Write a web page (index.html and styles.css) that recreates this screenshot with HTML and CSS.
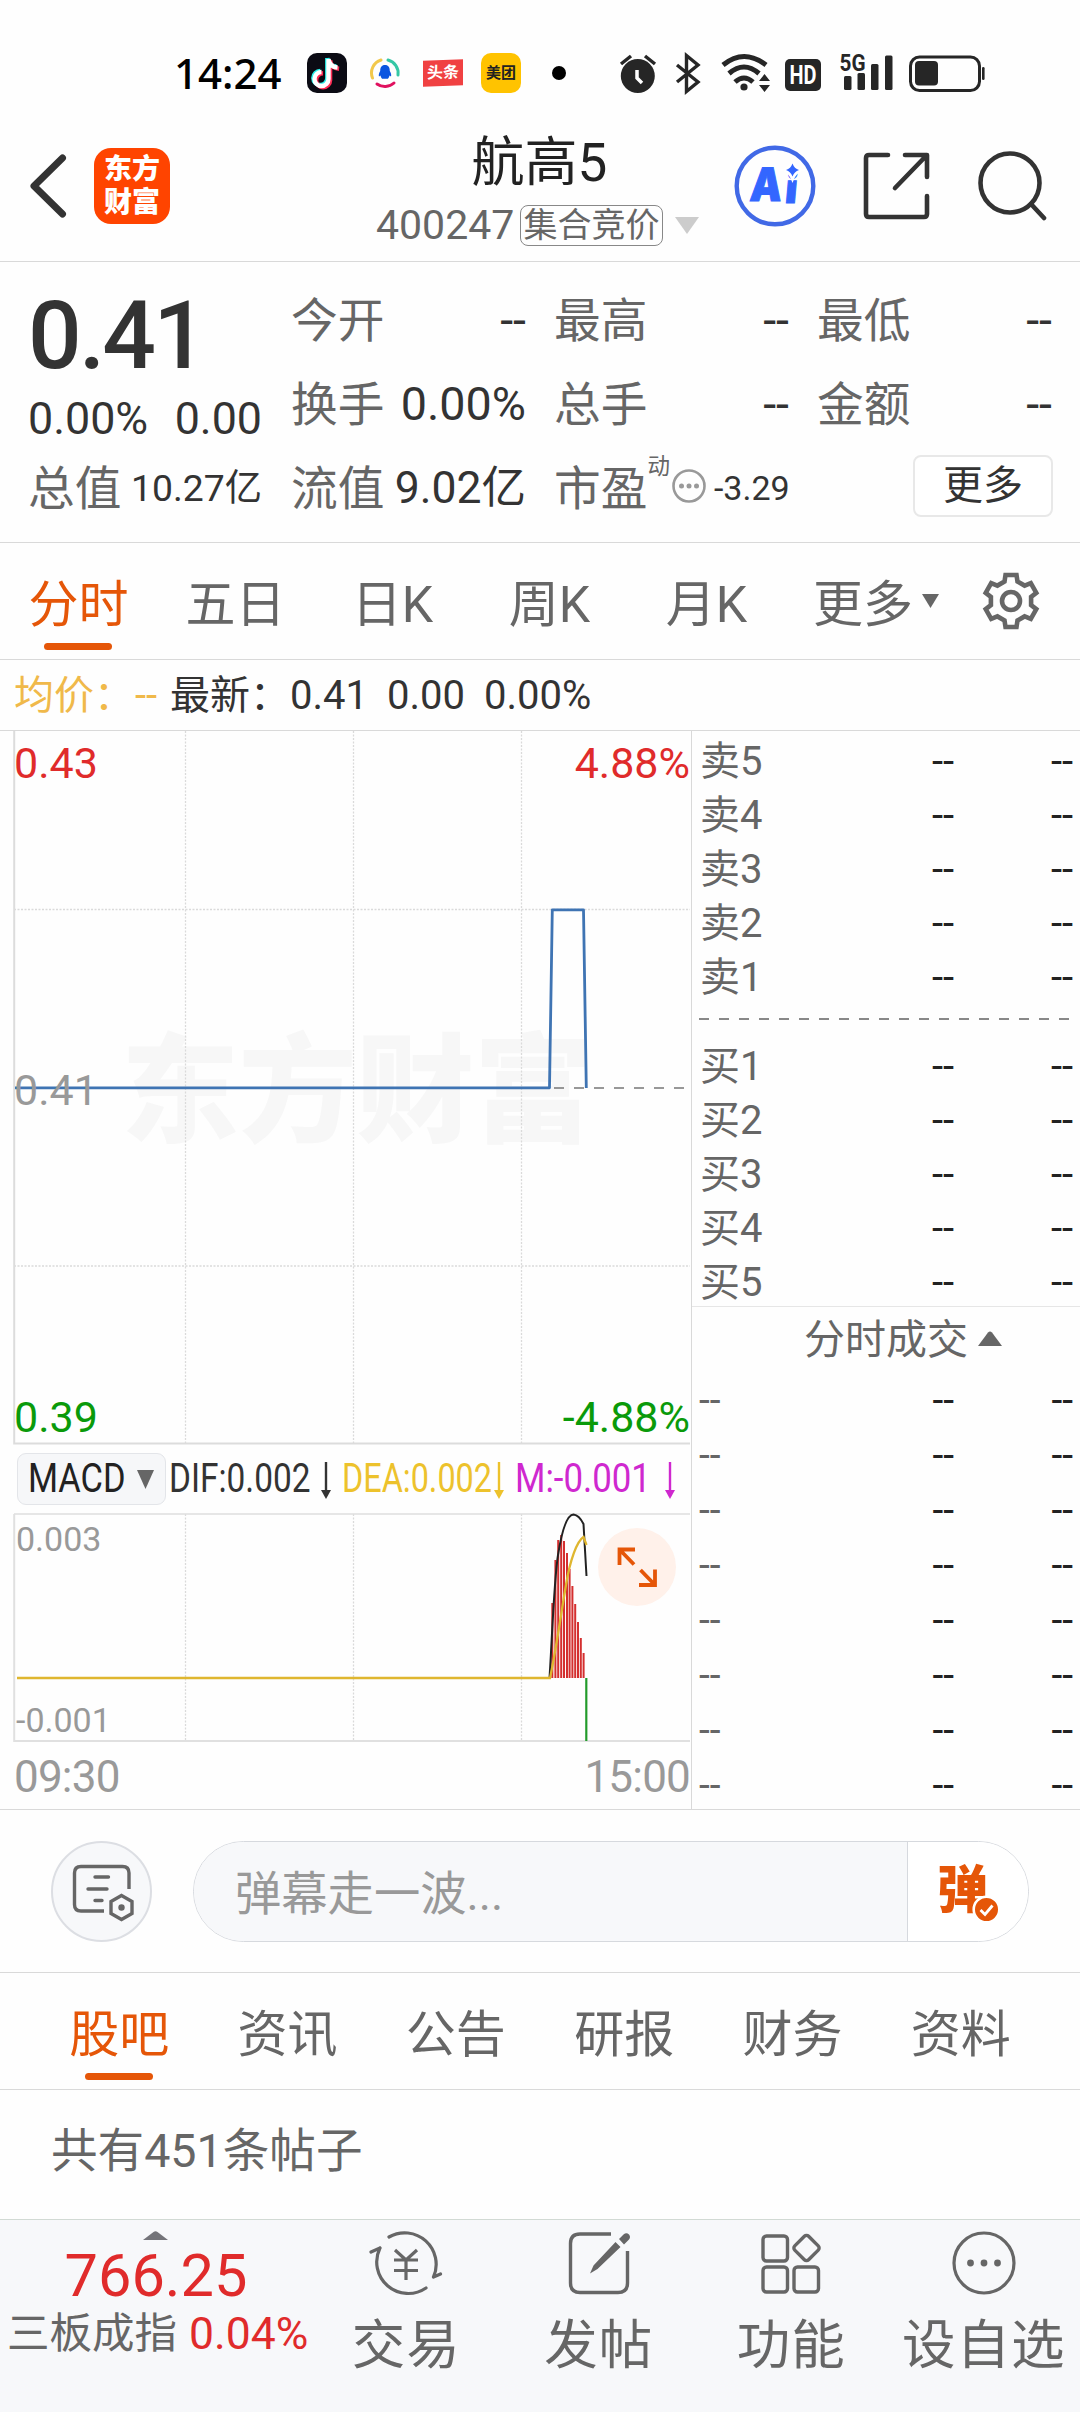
FILE: index.html
```html
<!DOCTYPE html>
<html lang="zh-CN">
<head>
<meta charset="utf-8">
<title>航高5 400247</title>
<link rel="stylesheet" href="styles.css">
</head>
<body>
<div class="status">
  <span class="clock">14:24</span>
  <svg class="st-tiktok" width="40" height="40" viewBox="0 0 40 40">
    <rect width="40" height="40" rx="10" fill="#0b0b14"/>
    <g fill="none" stroke-width="4.400">
      <path d="M21.500 6v20a7 7 0 1 1-7-7M21.500 6c.5 5 4 8 9 8.500" stroke="#2af0ea" transform="translate(-1.200 -1)"/>
      <path d="M21.500 6v20a7 7 0 1 1-7-7M21.500 6c.5 5 4 8 9 8.500" stroke="#fe2c55" transform="translate(1.600 1.200)"/>
      <path d="M21.500 6v20a7 7 0 1 1-7-7M21.500 6c.5 5 4 8 9 8.500" stroke="#fff"/>
    </g>
  </svg>
  <svg class="st-tencent" width="32" height="32" viewBox="0 0 32 32">
    <g fill="none" stroke-width="3" stroke-linecap="round">
      <path d="M3.500 21A13.500 13.500 0 0 1 12 3" stroke="#f2c84b"/>
      <path d="M19 3A13.500 13.500 0 0 1 29 18" stroke="#35c7a5"/>
      <path d="M8 27A13.500 13.500 0 0 0 25 26" stroke="#e0115f"/>
    </g>
    <path d="M16 8c-3.500 0-4.800 2.500-4.800 6-1.200 2-1.800 4-1.200 5.500l1.500-1c.3 1.500 1 2.500 1.500 3.200h6c.5-.7 1.200-1.700 1.500-3.200l1.500 1c.6-1.500 0-3.500-1.200-5.500 0-3.500-1.300-6-4.800-6z" fill="#0b55e0"/>
  </svg>
  <span class="st-toutiao">头条</span>
  <span class="st-meituan">美团</span>
  <span class="st-dot"></span>
  <svg class="st-system" width="370" height="64" viewBox="618 41 370 64" fill="#262626">
    <circle cx="637.800" cy="76" r="17"/>
    <path d="M621 64l10-8M655 64l-10-8" stroke="#262626" stroke-width="3.500"/>
    <path d="M637 70v8l5 5" stroke="#fff" stroke-width="3.500" fill="none"/>
    <path d="M677 65l21 17-11.500 9.500V55.500L698 65l-21 17" fill="none" stroke="#262626" stroke-width="3.400"/>
    <g fill="none" stroke="#262626" stroke-width="5">
      <path d="M723 65q21-17 43 0"/><path d="M729 73.500q15-13 30 0"/><path d="M735 82q9-8 18 0"/>
    </g>
    <circle cx="744" cy="87" r="3.600"/>
    <path d="M759 81l5.500-7 5.500 7zM759 85l5.500 7 5.500-7z"/>
    <rect x="785" y="59" width="36" height="32" rx="5"/>
    <text x="789.500" y="84" font-size="25" font-weight="700" fill="#fff" textLength="27" lengthAdjust="spacingAndGlyphs">HD</text>
    <text x="839.500" y="70.500" font-size="24" font-weight="700" textLength="26" lengthAdjust="spacingAndGlyphs">5G</text>
    <rect x="844" y="76" width="7.500" height="14" rx="1.500"/><rect x="857.500" y="73" width="7.500" height="17" rx="1.500"/>
    <rect x="871" y="64" width="7.500" height="26" rx="1.500"/><rect x="885" y="55.500" width="7.500" height="34.500" rx="1.500"/>
    <rect x="910.500" y="57" width="69" height="33.500" rx="9" fill="none" stroke="#262626" stroke-width="3"/>
    <rect x="915" y="61" width="23" height="24.500" rx="4"/><rect x="982" y="67" width="2.600" height="13" rx="1.300"/>
  </svg>
</div>

<header class="header">
  <div class="head-left">
    <svg class="back" width="38" height="64" viewBox="0 0 38 64"><path d="M33.500 4L5 32l28.500 28" fill="none" stroke="#333" stroke-width="7" stroke-linecap="round" stroke-linejoin="round"/></svg>
    <div class="app-logo"><span>东方</span><span>财富</span></div>
  </div>
  <div class="head-title">
    <div class="name">航高5</div>
    <div class="code-row">
      <span class="code">400247</span><span class="tag">集合竞价</span>
      <svg class="code-caret" width="24" height="17" viewBox="0 0 24 17"><path d="M0 0h24L12 17z" fill="#ccc"/></svg>
    </div>
  </div>
  <div class="head-right">
    <svg width="82" height="84" viewBox="0 0 82 84">
      <circle cx="41" cy="42" r="38.300" fill="none" stroke="#4169e6" stroke-width="4.400"/>
      <g transform="translate(15 57) skewX(-5)"><text class="ai-text" y="0" font-size="46" fill="#3366ff" stroke="#3366ff" stroke-width="1"><tspan x="0" textLength="32" lengthAdjust="spacingAndGlyphs">A</tspan><tspan x="35.500" dy="2" font-size="41">i</tspan></text></g>
      <path d="M58.500 17q-3 7.500-8.500 9 5.500 1.500 8.500 9 3-7.500 8.500-9-5.500-1.500-8.500-9z" fill="#fff" stroke="#fff" stroke-width="3"/>
      <path d="M58.500 19.500q1.800 5 6.500 6.500-4.700 1.500-6.500 6.500-1.800-5-6.500-6.500 4.700-1.500 6.500-6.500z" fill="#3366ff"/>
    </svg>
    <svg width="67" height="68" viewBox="0 0 67 68" fill="none" stroke="#333" stroke-width="4.600" stroke-linecap="round" stroke-linejoin="round">
      <path d="M25 3H6Q3 3 3 6v56q0 3 3 3h55q3 0 3-3V44M64 25V3H42M63 4L32 36"/>
    </svg>
    <svg width="69" height="72" viewBox="0 0 69 72" fill="none" stroke="#333" stroke-width="4.600" stroke-linecap="round">
      <circle cx="32" cy="33" r="29.500"/><path d="M53 54l13 14"/>
    </svg>
  </div>
</header>

<section class="quote">
  <div class="q-main">
    <div class="price">0.41</div>
    <div class="change"><span>0.00%</span><span>0.00</span></div>
    <div class="cell"><span class="lb">总值</span><span class="v37">10.27亿</span></div>
  </div>
  <div class="q-grid">
    <div class="cell"><span class="lb">今开</span><span>--</span></div>
    <div class="cell"><span class="lb">最高</span><span>--</span></div>
    <div class="cell"><span class="lb">最低</span><span>--</span></div>
    <div class="cell"><span class="lb">换手</span><span>0.00%</span></div>
    <div class="cell"><span class="lb">总手</span><span>--</span></div>
    <div class="cell"><span class="lb">金额</span><span>--</span></div>
    <div class="cell"><span class="lb">流值</span><span class="v44">9.02亿</span></div>
    <div class="cell pe">
      <span class="lb">市盈</span><span class="dyn">动</span>
      <svg width="34" height="36" viewBox="0 0 34 36"><circle cx="17" cy="17" r="15.500" fill="none" stroke="#999" stroke-width="2.600"/><g fill="#999"><circle cx="9.500" cy="17" r="2.500"/><circle cx="17" cy="17" r="2.500"/><circle cx="24.500" cy="17" r="2.500"/></g></svg>
      <span class="v34">-3.29</span>
    </div>
    <div class="cell more-cell"><button class="more">更多</button></div>
  </div>
</section>

<nav class="tabs periods">
  <a class="tab active">分时</a><a class="tab">五日</a><a class="tab">日K</a><a class="tab">周K</a><a class="tab">月K</a>
  <a class="tab has-caret">更多<svg class="caret" width="17" height="14" viewBox="0 0 17 14"><path d="M0 0h17L8.500 14z" fill="#666"/></svg></a>
  <svg class="gear" width="60" height="60" viewBox="-30 -30 60 60" fill="none" stroke="#666" stroke-width="4.600">
    <path d="M-5.500-26H5.500L6.500-19.500 13.600-15.400 19.800-17.800 25.300-8.200 20.100-4.100V4.100L25.300 8.200 19.800 17.800 13.600 15.400 6.500 19.500 5.500 26H-5.500L-6.500 19.500-13.600 15.400-19.800 17.800-25.300 8.200-20.100 4.100V-4.100L-25.300-8.200-19.800-17.800-13.600-15.400-6.500-19.500Z"/><circle r="9"/>
  </svg>
</nav>

<div class="avg">
  <span class="gold">均价：</span><span class="gold avg-v">--</span><span>最新：</span><span class="a1">0.41</span><span class="a2">0.00</span><span>0.00%</span>
</div>

<main class="board">
  <div class="charts">
    <svg class="price-chart" width="691" height="714" viewBox="0 731 691 714">
      <text class="watermark" x="121" y="1133" font-size="118" textLength="471">东方财富</text>
      <g class="grid"><path d="M185.500 731V1443M353.500 731V1443M521.500 731V1443M14 909.500H690M14 1266H690"/></g>
      <path d="M14.200 731V1443.500H690" fill="none" stroke="#dcdcdc" stroke-width="2"/>
      <path d="M554 1088H690" stroke="#777" stroke-width="1.600" stroke-dasharray="10 10"/>
      <path d="M15 1087.800H549.500L552.300 909.800H583.500L586.300 1088" fill="none" stroke="#3f74b3" stroke-width="2.800" stroke-linejoin="round"/>
      <g font-size="43">
        <text x="14" y="777.500" fill="#e02b2b">0.43</text><text x="690" y="777.500" fill="#e02b2b" text-anchor="end">4.88%</text>
        <text x="14" y="1104.500" fill="#999">0.41</text>
        <text x="14" y="1431.500" fill="#0a9a0a">0.39</text><text x="690" y="1431.500" fill="#0a9a0a" text-anchor="end">-4.88%</text>
      </g>
    </svg>
    <div class="legend">
      <div class="indicator">
        <span class="squeeze macd-name">MACD</span>
        <svg width="17" height="19" viewBox="0 0 17 19"><path d="M0 0h17L8.500 19z" fill="#666"/></svg>
      </div>
      <div class="item dif"><span class="squeeze">DIF:0.002</span><svg width="10" height="37" viewBox="0 0 10 37"><path d="M5 0v30" stroke="currentColor" stroke-width="2.400"/><path d="M0 28h10l-5 9z" fill="currentColor"/></svg></div>
      <div class="item dea"><span class="squeeze">DEA:0.002</span><svg width="10" height="37" viewBox="0 0 10 37"><path d="M5 0v30" stroke="currentColor" stroke-width="2.400"/><path d="M0 28h10l-5 9z" fill="currentColor"/></svg></div>
      <div class="item m"><span class="squeeze">M:-0.001</span><svg width="10" height="37" viewBox="0 0 10 37"><path d="M5 0v30" stroke="currentColor" stroke-width="2.400"/><path d="M0 28h10l-5 9z" fill="currentColor"/></svg></div>
    </div>
    <svg class="macd-chart" width="691" height="230" viewBox="0 1513 691 230">
      <g class="grid"><path d="M185.500 1514V1741M353.500 1514V1741M521.500 1514V1741"/></g>
      <path d="M14 1514H690" stroke="#dedede" stroke-width="1.400"/>
      <path d="M14.200 1514V1741H690" fill="none" stroke="#e0e0e0" stroke-width="2"/>
      <path d="M552.300 1678V1603M555.400 1678V1560M558.200 1678V1540M561.200 1678V1535M564 1678V1541M567 1678V1553M569.600 1678V1569M572.400 1678V1586M575.200 1678V1604M578 1678V1622M580.800 1678V1638M583.600 1678V1653" stroke="#d42f2f" stroke-width="2"/>
      <path d="M586.300 1678V1741" stroke="#239b2b" stroke-width="2.200"/>
      <path d="M549.500 1678C552 1640 554 1580 558 1555C562 1530 567 1514.500 573.500 1514.500C578 1515 581 1519 583.500 1524L586.500 1576" fill="none" stroke="#222" stroke-width="2"/>
      <path d="M17 1678H550C556 1650 560 1620 566 1585C570 1560 577 1541 583.500 1537L586.500 1545" fill="none" stroke="#dfb62f" stroke-width="2.300"/>
      <g font-size="34" fill="#999"><text x="16" y="1551">0.003</text><text x="16" y="1732">-0.001</text></g>
      <circle cx="637" cy="1567" r="39" fill="#fff1ea"/>
      <path d="M619.500 1565V1549.500H635M620 1550L634 1564.500M655 1569.500V1585H639M654.500 1584.500L640.500 1570" fill="none" stroke="#e55608" stroke-width="3.800"/>
    </svg>
    <div class="times"><span>09:30</span><span>15:00</span></div>
  </div>
  <div class="book">
    <div class="orders sell">
      <div class="o"><span>卖5</span><b>--</b><b>--</b></div><div class="o"><span>卖4</span><b>--</b><b>--</b></div><div class="o"><span>卖3</span><b>--</b><b>--</b></div><div class="o"><span>卖2</span><b>--</b><b>--</b></div><div class="o"><span>卖1</span><b>--</b><b>--</b></div>
    </div>
    <div class="sep"></div>
    <div class="orders buy">
      <div class="o"><span>买1</span><b>--</b><b>--</b></div><div class="o"><span>买2</span><b>--</b><b>--</b></div><div class="o"><span>买3</span><b>--</b><b>--</b></div><div class="o"><span>买4</span><b>--</b><b>--</b></div><div class="o"><span>买5</span><b>--</b><b>--</b></div>
    </div>
    <div class="deals-head">分时成交<svg width="24" height="15" viewBox="0 0 24 15"><path d="M0 15L10 1.500q2-2 4 0L24 15z" fill="#666"/></svg></div>
    <div class="deals">
      <div class="o"><span>--</span><b>--</b><b>--</b></div><div class="o"><span>--</span><b>--</b><b>--</b></div><div class="o"><span>--</span><b>--</b><b>--</b></div><div class="o"><span>--</span><b>--</b><b>--</b></div>
      <div class="o"><span>--</span><b>--</b><b>--</b></div><div class="o"><span>--</span><b>--</b><b>--</b></div><div class="o"><span>--</span><b>--</b><b>--</b></div><div class="o"><span>--</span><b>--</b><b>--</b></div>
    </div>
  </div>
</main>

<section class="danmu">
  <div class="dm-set">
    <svg width="64" height="64" viewBox="70 1862 64 64" fill="none" stroke="#666" stroke-width="3.400" stroke-linecap="round">
      <path d="M129 1890V1874q0-6.500-6.500-6.500H81q-6.500 0-6.500 6.500v31.500q0 6.500 6.500 6.500H104" stroke-linecap="butt"/>
      <path d="M95 1878h13.500M88 1890h19M95 1901.500h7"/>
      <path d="M121.500 1896.500l10.500 6v12l-10.500 6-10.500-6v-12z" stroke-linejoin="miter"/><circle cx="121.500" cy="1908.500" r="3.200" fill="#666" stroke="none"/>
    </svg>
  </div>
  <div class="dm-box">
    <div class="dm-input">弹幕走一波...</div>
    <div class="dm-send"><span>弹</span>
      <svg width="29" height="29" viewBox="0 0 29 29"><circle cx="14.500" cy="14.500" r="12.800" fill="#e55608" stroke="#fff" stroke-width="2.600"/><path d="M8.500 15l4.500 4.500 7.500-9" fill="none" stroke="#fff" stroke-width="2.800"/></svg>
    </div>
  </div>
</section>

<nav class="tabs channels">
  <a class="tab active">股吧</a><a class="tab">资讯</a><a class="tab">公告</a><a class="tab">研报</a><a class="tab">财务</a><a class="tab">资料</a>
</nav>
<section class="posts">共有451条帖子</section>

<footer class="bottom">
  <div class="index">
    <svg width="25" height="9" viewBox="0 0 25 9"><path d="M0 9L10.500 1q2-1.500 4 0L25 9z" fill="#747479"/></svg>
    <div class="idx-v">766.25</div>
    <div class="idx-n"><span>三板成指</span><span class="red">0.04%</span></div>
  </div>
  <div class="act">
    <svg width="76" height="68" viewBox="-38 -34 76 68" fill="none" stroke="#666" stroke-width="3.200" stroke-linecap="round">
      <path d="M-17-26A31.500 31.500 0 0 1 27.500 14M20 25A31.500 31.500 0 0 1-26-15M-35-11l9-4M27.500 14l7-3"/>
      <path d="M-11-13L0-3 11-13M-12-3H12M-12 7.500H12M0-3V17" stroke-linecap="butt"/>
    </svg><span>交易</span>
  </div>
  <div class="act">
    <svg width="76" height="68" viewBox="-38 -34 76 68" fill="none" stroke="#666" stroke-width="3.400">
      <path d="M12-29H-19q-9.500 0-9.500 9.500V20q0 9.500 9.500 9.500H19q9.500 0 9.500-9.500V-12"/>
      <path d="M-9 10.500l3.500-8L16.500-21l5 5L-1.500 6zM20-24l4.500-4.500q3-2.500 5.500 0 2 2.500 0 5L25-18.500z" fill="#666" stroke="none"/>
    </svg><span>发帖</span>
  </div>
  <div class="act">
    <svg width="76" height="68" viewBox="-38 -34 76 68" fill="none" stroke="#666" stroke-width="3.400">
      <rect x="-28" y="-27" width="24.500" height="25" rx="3.500"/><rect x="-28" y="4" width="24.500" height="25" rx="3.500"/><rect x="3" y="4" width="24.500" height="25" rx="3.500"/>
      <rect x="-9.800" y="-9.800" width="19.600" height="19.600" rx="3" transform="translate(15.500 -15) rotate(45)"/>
    </svg><span>功能</span>
  </div>
  <div class="act">
    <svg width="76" height="68" viewBox="-38 -34 76 68"><circle r="30" fill="none" stroke="#666" stroke-width="3.200"/><g fill="#666"><circle cx="-13.500" r="3.400"/><circle r="3.400"/><circle cx="13.500" r="3.400"/></g></svg><span>设自选</span>
  </div>
</footer>
</body>
</html>
```
FILE: styles.css
```css
* { box-sizing: border-box; }
html, body { margin: 0; padding: 0; }
body {
  width: 1080px; height: 2412px; overflow: hidden; background: #fefefe; color: #333;
  font-family: Roboto, "Noto Sans CJK SC", sans-serif;
  display: flex; flex-direction: column;
}
body > * { flex: none; }
svg { display: block; flex: none; }
text { font-family: Roboto, "Noto Sans CJK SC", sans-serif; }

/* status bar */
.status { height: 111px; display: flex; align-items: center; padding-left: 174px; }
.status > * { margin-top: 35px; flex: none; }
.clock { font: 500 42px/42px "Noto Sans", sans-serif; color: #000; width: 133px; }
.st-tiktok { margin-right: 22px; }
.st-tencent { margin-right: 22px; }
.st-toutiao {
  width: 40px; height: 26px; background: #f04142; color: #fff; font-size: 16px; font-weight: 700;
  line-height: 26px; text-align: center; transform: skewY(-2deg); margin-right: 18px;
}
.st-meituan {
  width: 40px; height: 40px; border-radius: 10px; background: #ffc300; color: #222;
  font-size: 15px; font-weight: 700; line-height: 40px; text-align: center; margin-right: 31px;
}
.st-dot { width: 14px; height: 14px; border-radius: 50%; background: #000; margin-right: 52px; }

/* header */
.header { height: 151px; display: grid; grid-template-columns: 375px 1fr 380px; border-bottom: 1.500px solid #d9d9d9; }
.head-left { display: flex; align-items: center; padding-left: 29px; }
.back { margin-right: 27px; }
.app-logo {
  width: 76px; height: 76px; border-radius: 17px; background: #ff4400; color: #fff;
  display: flex; flex-direction: column; justify-content: center; align-items: center;
  font-size: 28px; font-weight: 900; line-height: 33px;
}
.head-title { display: flex; flex-direction: column; align-items: center; padding-top: 19px; }
.name { font-size: 53px; line-height: 67px; color: #222; padding-left: 4px; }
.code-row { display: flex; align-items: center; height: 56px; width: 325px; color: #666; padding-left: 1px; }
.code { font-size: 41px; line-height: 56px; width: 144px; flex: none; }
.tag {
  width: 143px; height: 41px; border: 1.500px solid #888; border-radius: 8px; flex: none;
  font-size: 34px; line-height: 39px; text-align: center;
}
.code-caret { margin-left: 12px; }
.head-right { display: flex; align-items: center; padding-left: 34px; }
.head-right svg:nth-child(2) { margin-left: 47px; }
.head-right svg:nth-child(3) { margin-left: 48px; }
.ai-text { font-family: Inter, sans-serif; font-weight: 900; }

/* quote */
.quote { height: 281px; padding: 16px 27px 0 28px; display: flex; gap: 29px; border-bottom: 1.500px solid #d9d9d9; }
.q-main { width: 234px; }
.price { font-size: 94.500px; font-weight: 500; line-height: 115px; height: 115px; letter-spacing: -2.800px; }
.change { font-size: 44.800px; line-height: 52px; height: 53px; display: flex; justify-content: space-between; }
.q-grid { flex: 1; display: grid; grid-template-columns: repeat(3, 235px); column-gap: 28px; grid-auto-rows: 84px; }
.cell { height: 84px; display: flex; align-items: center; justify-content: space-between; font-size: 46.700px; line-height: 84px; white-space: nowrap; }
.lb { color: #666; padding-top: 2px; }
.v37 { font-size: 37.300px; }
.v44 { font-size: 44.500px; }
.v34 { font-size: 34px; }
.pe { justify-content: flex-start; }
.dyn { font-size: 22.500px; line-height: 24px; color: #666; align-self: flex-start; padding-top: 8px; }
.pe svg { margin: -3px 8px 0 2px; }
.more-cell { justify-content: flex-end; }
.more {
  width: 140px; height: 62px; border: 2px solid #e8e8e8; border-radius: 8px; background: #fff; padding: 0;
  font: 40px/54px Roboto, "Noto Sans CJK SC", sans-serif; color: #333; margin: -4px -1px 0 0;
}

/* tabs */
.tabs { height: 117px; display: grid; border-bottom: 1.500px solid #d9d9d9; }
.periods { grid-template-columns: repeat(6, 157px) 1fr; }
.channels { grid-template-columns: repeat(6, 1fr); padding: 0 35px; }
.tab { font-size: 50px; line-height: 76px; padding-top: 24px; color: #666; display: flex; flex-direction: column; align-items: center; }
.tab.active { color: #e55608; }
.tab.active::after { content: ""; width: 68px; height: 7px; border-radius: 4px; background: #e55608; margin-right: 1px; }
.tab.has-caret { flex-direction: row; align-items: flex-start; padding-left: 28px; }
.caret { margin: 27px 0 0 9px; }
.gear { margin: 28px 0 0 39px; }

/* average line */
.avg { height: 71px; display: flex; padding-left: 14px; font-size: 40px; line-height: 71px; white-space: pre; border-bottom: 1.500px solid #d9d9d9; }
.gold { color: #f0b94a; }
.avg span:nth-child(1) { width: 121px; }
.avg .avg-v { width: 35px; }
.avg span:nth-child(3) { width: 120px; }
.a1 { width: 97px; }
.a2 { width: 97px; }

/* board */
.board { height: 1079px; display: flex; border-bottom: 1.500px solid #d9d9d9; }
.charts { width: 692px; border-right: 1.500px solid #d9d9d9; }
.grid { fill: none; stroke: #dadada; stroke-width: 1.300; stroke-dasharray: 2 1.500; }
.watermark { font-weight: 900; fill: #f7f7f7; }
.legend { height: 68px; display: flex; align-items: center; font-size: 40px; line-height: 50px; }
.squeeze { display: block; flex: none; white-space: nowrap; transform-origin: 0 50%; transform: scaleX(.835); }
.indicator {
  width: 149px; height: 52px; margin-left: 17px; border: 1.500px solid #e3e5e9; border-radius: 9px; background: #f6f7f9; color: #222;
  display: flex; align-items: center; justify-content: space-between; padding: 0 11px 0 10px; flex: none;
}
.indicator svg { flex: none; }
.macd-name { width: 98px; transform: scaleX(.86); }
.item { display: flex; align-items: center; flex: none; }
.item .squeeze { width: 152px; }
.item svg { margin-top: 2px; }
.dif { color: #333; margin-left: 3px; }
.dea { color: #edc22c; margin-left: 11px; }
.dea .squeeze { transform: scaleX(.81); }
.m { color: #cf28cf; margin-left: 11px; }
.m .squeeze { width: 150px; transform: scaleX(.87); }
.times { display: flex; justify-content: space-between; padding: 0 1px 0 14px; font-size: 44px; letter-spacing: -.8px; line-height: 69px; color: #999; }

.book { flex: 1; font-size: 39px; color: #666; }
.o { display: grid; grid-template-columns: 1fr 120px 119px; height: 54px; line-height: 54px; padding: 0 7px 0 7px; }
.o b { font-weight: 400; color: #222; text-align: right; }
.orders { padding-top: 4px; }
.sell { height: 287px; }
.sell .o, .buy .o { font-size: 40px; }
.sell span, .buy span { padding-left: 1px; }
.sep { height: 2px; margin: 0 9px 0 7px; background: repeating-linear-gradient(90deg, #888 0 10px, transparent 10px 20px); }
.buy { height: 287px; padding-top: 20px; border-bottom: 1.500px solid #e6e6e6; }
.deals-head { height: 66px; font-size: 41px; line-height: 65px; display: flex; align-items: center; padding: 1px 0 0 112px; gap: 10px; }
.deals-head svg { margin-top: -5px; }
.deals .o { height: 55px; line-height: 55px; }

/* danmu */
.danmu { height: 163px; display: flex; align-items: center; padding-left: 51px; border-bottom: 1.500px solid #d9d9d9; }
.dm-set { width: 101px; height: 101px; border: 2px solid #dcdee3; border-radius: 50%; background: #f7f8fa; display: flex; align-items: center; justify-content: center; }
.dm-set svg { margin-top: 4px; }
.dm-box { width: 836px; height: 101px; margin-left: 41px; border: 1.500px solid #d6d9de; border-radius: 51px; overflow: hidden; display: flex; }
.dm-input { width: 714px; background: #f7f8fa; border-right: 1.500px solid #d6d9de; padding-left: 41px; font-size: 46.300px; line-height: 104px; color: #999; }
.dm-send { flex: 1; display: flex; position: relative; padding-left: 29px; background: #fff; }
.dm-send span { font-size: 51px; font-weight: 900; line-height: 97px; color: #e55608; }
.dm-send svg { position: absolute; left: 64px; top: 53px; }

.posts { height: 129px; padding-left: 51px; font-size: 46.600px; line-height: 123px; color: #666; }

/* bottom bar */
.bottom { flex: 1; background: #f7f8fa; border-top: 1.500px solid #d2dad4; display: grid; grid-template-columns: 310px repeat(4, 192.500px); }
.index { display: flex; flex-direction: column; align-items: center; padding-top: 11px; white-space: nowrap; }
.idx-v { font-size: 59.500px; line-height: 72px; height: 70px; color: #e02b2b; padding-left: 2px; }
.idx-n { display: flex; gap: 12px; font-size: 42.500px; line-height: 48px; color: #666; align-self: flex-start; padding-left: 7px; }
.idx-n .red { font-size: 44.500px; color: #e02b2b; }
.act { display: flex; flex-direction: column; align-items: center; padding-top: 9px; font-size: 53.500px; color: #666; }
.act span { line-height: 86px; margin-top: 6px; letter-spacing: 1px; }
```
